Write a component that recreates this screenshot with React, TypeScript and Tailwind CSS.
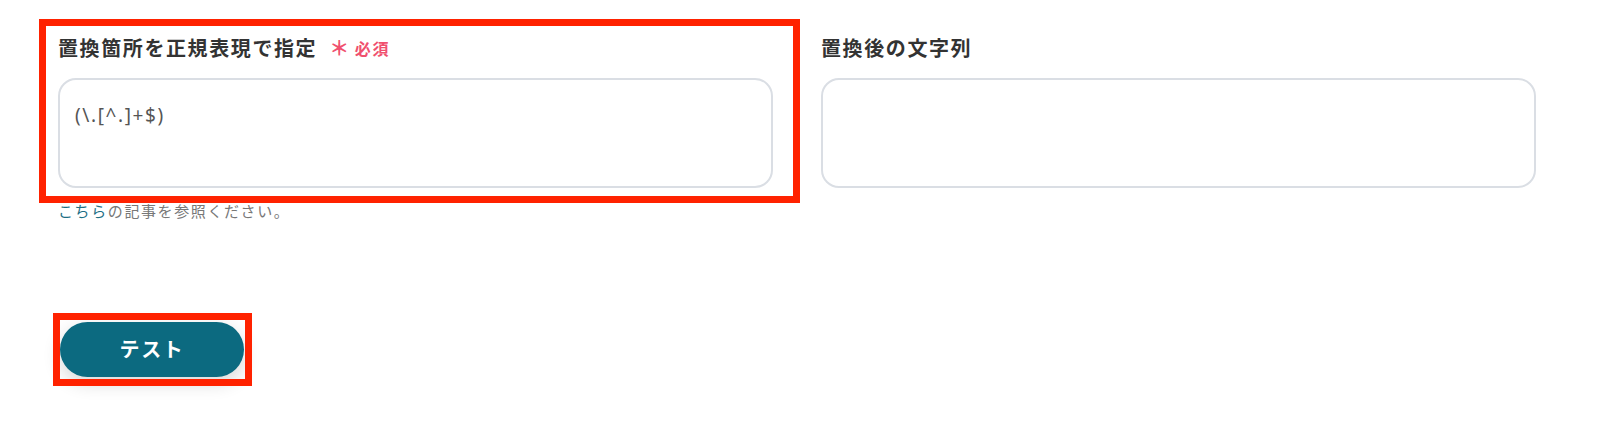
export default function App() {
  return (
    <div className="min-h-[434px] bg-white pl-[58px] pt-[35px] font-['Noto_Sans','Noto_Sans_CJK_JP',sans-serif] tracking-[0.1em]">
      <div className="grid grid-cols-[715px_715px] gap-x-[48px]">
        {/* left field */}
        <div className="relative">
          <div className="flex h-[28px] items-center gap-[12px]">
            <span className="text-[20px] leading-[28px] font-bold text-[#333333]">置換箇所を正規表現で指定</span>
            <span className="flex items-center gap-[4px] text-[16px] leading-[28px] font-bold text-[#f0506e]">
              <span className="text-[20px]">＊</span>
              <span>必須</span>
            </span>
          </div>
          <div className="mt-[15px] h-[110px] rounded-[18px] border-2 border-[#dadee4] px-[15px] pt-[22px]">
            <span className="text-[19px] leading-[26px] text-[#555555]">(\.[^.]+$)</span>
          </div>
          <p className="mt-[13px] text-[15px] leading-[20px] text-[#777777]">
            <span className="text-[#1d6f85]">こちら</span>の記事を参照ください。
          </p>
          <div className="pointer-events-none absolute left-[-19px] top-[-16px] h-[184px] w-[761px] border-[7px] border-[#ff2200]" />
        </div>

        {/* right field */}
        <div>
          <div className="flex h-[28px] items-center">
            <span className="text-[20px] leading-[28px] font-bold text-[#333333]">置換後の文字列</span>
          </div>
          <div className="mt-[15px] h-[110px] rounded-[18px] border-2 border-[#dadee4]" />
        </div>
      </div>

      <div className="relative ml-[2px] mt-[101px] w-[184px]">
        <button className="flex h-[55px] w-[184px] items-center justify-center rounded-full bg-[#0c6a80] text-[20px] font-bold text-white shadow-[0_6px_18px_rgba(0,0,0,0.16)]">
          テスト
        </button>
        <div className="pointer-events-none absolute left-[-7px] top-[-9px] h-[73px] w-[199px] border-[7px] border-[#ff2200]" />
      </div>
    </div>
  );
}
